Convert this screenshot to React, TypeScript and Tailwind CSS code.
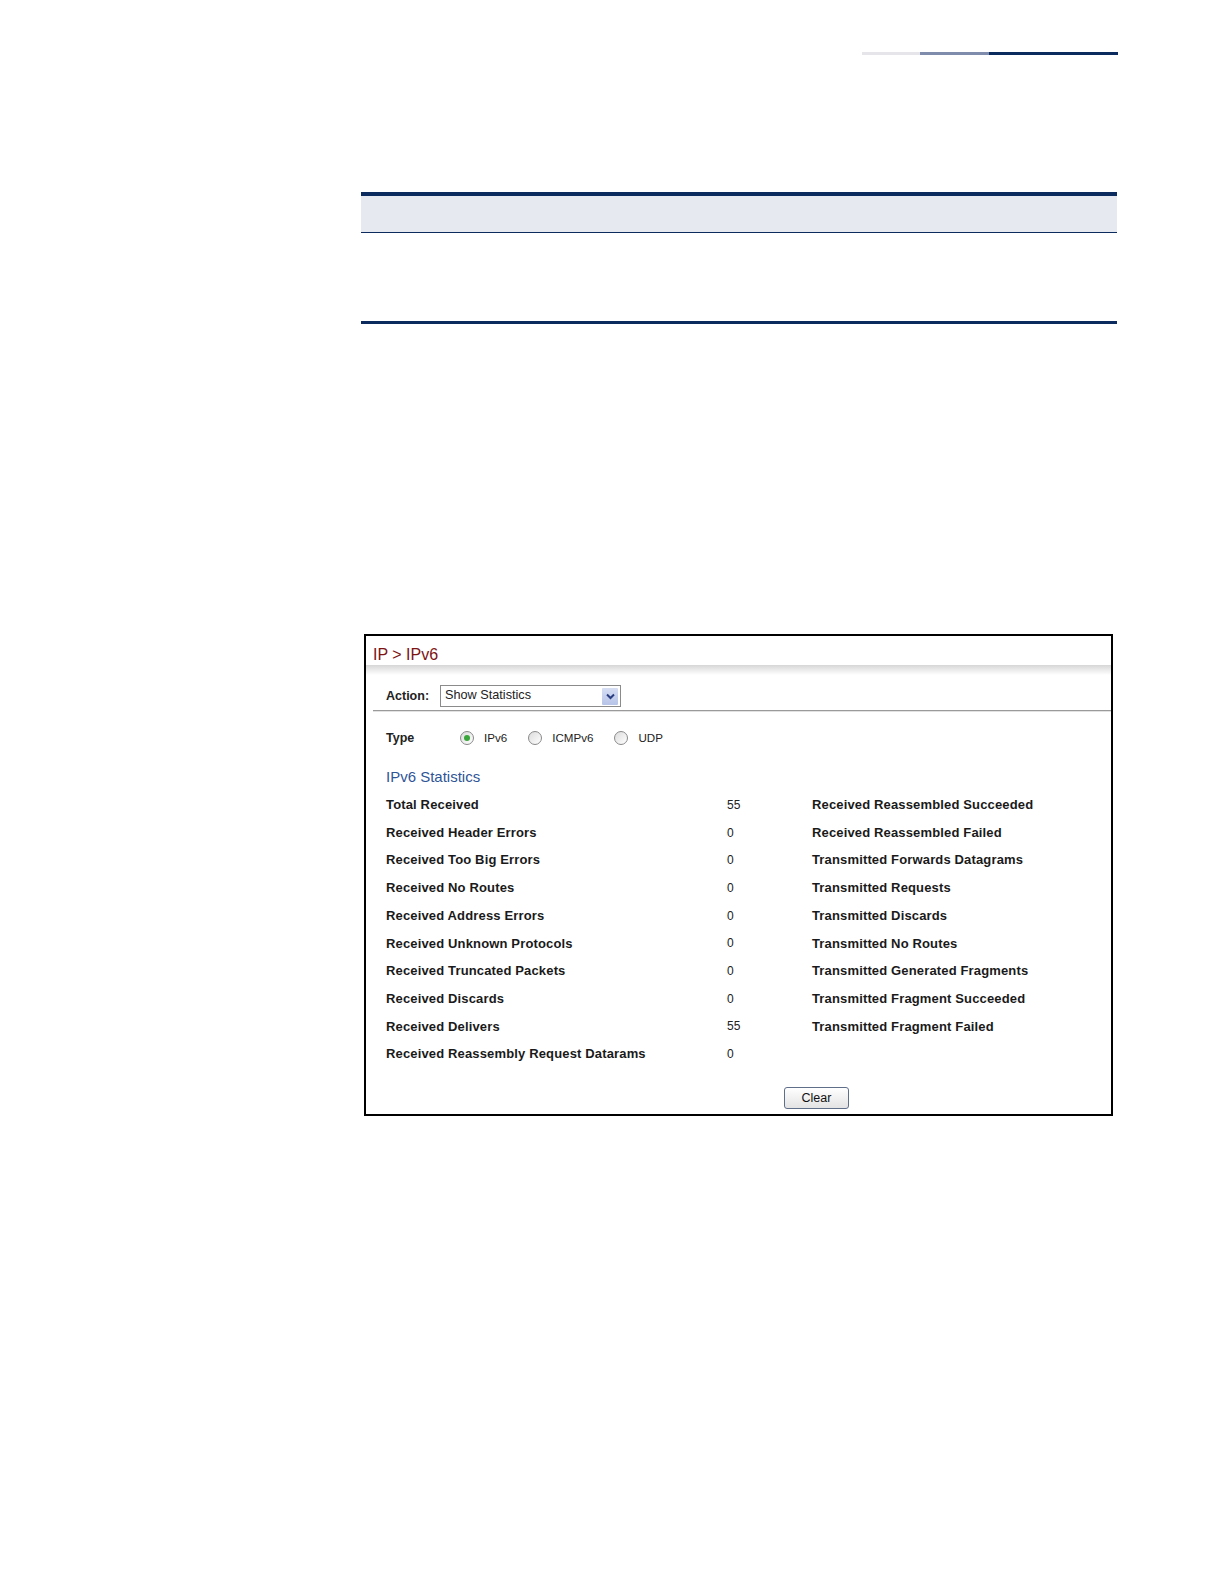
import React from 'react';

const left = [
    ['Total Received', '55'],
    ['Received Header Errors', '0'],
    ['Received Too Big Errors', '0'],
    ['Received No Routes', '0'],
    ['Received Address Errors', '0'],
    ['Received Unknown Protocols', '0'],
    ['Received Truncated Packets', '0'],
    ['Received Discards', '0'],
    ['Received Delivers', '55'],
    ['Received Reassembly Request Datarams', '0'],
];

const right = [
    'Received Reassembled Succeeded',
    'Received Reassembled Failed',
    'Transmitted Forwards Datagrams',
    'Transmitted Requests',
    'Transmitted Discards',
    'Transmitted No Routes',
    'Transmitted Generated Fragments',
    'Transmitted Fragment Succeeded',
    'Transmitted Fragment Failed',
];

const Radio = ({ checked, label }: { checked?: boolean; label: string }) => (
    <div className="flex items-center">
        <span className="w-[14px] h-[14px] rounded-full border border-[#8a8a8a] bg-gradient-to-br from-[#dcdcdc] to-white flex items-center justify-center">
            {checked && <span className="w-[6px] h-[6px] rounded-full bg-[#3aa53a]" />}
        </span>
        <span className="ml-[10px] text-[11.6px] text-[#222]">{label}</span>
    </div>
);

export default function App() {
    return (
        <div className="w-[1224px] h-[1584px] bg-white overflow-hidden" style={{ fontFamily: '"Liberation Sans", Arial, sans-serif' }}>
            {/* page header rule */}
            <div className="flex justify-end pt-[52px] pr-[106px]">
                <div className="w-[58px] h-[3px] bg-[#e6e6ea]" />
                <div className="w-[69px] h-[3px] bg-[#7f8cab]" />
                <div className="w-[129px] h-[3px] bg-[#0b2a5e]" />
            </div>

            {/* empty table */}
            <div className="ml-[361px] mt-[137px] w-[756px]">
                <div className="border-t-[4px] border-[#0b2a5e] h-[41px] bg-[#e6e9ef] border-b border-b-[#0b2a5e]" />
                <div className="h-[88px]" />
                <div className="h-[3px] bg-[#0b2a5e]" />
            </div>

            {/* screenshot panel */}
            <div className="ml-[364px] mt-[310px] w-[749px] h-[482px] border-2 border-black flex flex-col">
                <div className="h-[29px] flex items-end pl-[7px] pb-[1px]">
                    <span className="text-[16px] leading-[18px] text-[#7d1414]">IP &gt; IPv6</span>
                </div>
                <div className="h-[10px] bg-gradient-to-b from-[#d6d6d6] via-[#ebebeb] to-white" />
                <div className="flex items-center h-[22px] mt-[10px] pl-[20px]">
                    <span className="text-[12.5px] font-bold text-[#222] w-[54px]">Action:</span>
                    <div className="w-[181px] h-[22px] border border-[#8b8b8b] flex items-center justify-between pl-[4px] pr-[2px]">
                        <span className="text-[12.7px] text-[#222]">Show Statistics</span>
                        <span className="w-[16px] h-[17px] bg-gradient-to-b from-[#d6def3] to-[#b7c4e8] flex items-center justify-center rounded-[1px]">
                            <svg width="9" height="7" viewBox="0 0 9 7">
                                <path d="M1 1.5 L4.5 5 L8 1.5" stroke="#2b3f80" strokeWidth="2" fill="none" />
                            </svg>
                        </span>
                    </div>
                </div>
                <div className="ml-[7px] mt-[3px] h-[2px] border-t border-[#9a9a9a] border-b border-b-[#e2e2e2]" />
                <div className="flex items-center h-[20px] mt-[16px] pl-[20px]">
                    <span className="text-[12.5px] font-bold text-[#222] w-[74px]">Type</span>
                    <div className="flex items-center gap-[21px]">
                        <Radio checked label="IPv6" />
                        <Radio label="ICMPv6" />
                        <Radio label="UDP" />
                    </div>
                </div>
                <div className="pl-[20px] mt-[20px] text-[15px] leading-[18px] text-[#2f5597]">IPv6 Statistics</div>
                <div className="pl-[20px] mt-[5px] flex">
                    <div className="w-[341px] flex flex-col">
                        {left.map(([l]) => (
                            <div key={l} className="h-[27.7px] flex items-center text-[13px] tracking-[0.15px] font-bold text-[#1a1a1a]">{l}</div>
                        ))}
                    </div>
                    <div className="w-[85px] flex flex-col">
                        {left.map(([l, v]) => (
                            <div key={l} className="h-[27.7px] flex items-center text-[12px] text-[#222]">{v}</div>
                        ))}
                    </div>
                    <div className="flex flex-col">
                        {right.map(r => (
                            <div key={r} className="h-[27.7px] flex items-center text-[13px] tracking-[0.15px] font-bold text-[#1a1a1a]">{r}</div>
                        ))}
                    </div>
                </div>
                <div className="flex mt-[19px] pl-[418px]">
                    <button className="w-[65px] h-[22px] border border-[#5f6f8a] rounded-[3px] bg-gradient-to-b from-white to-[#e3e3e3] text-[12.5px] text-[#111]">Clear</button>
                </div>
            </div>
        </div>
    );
}
